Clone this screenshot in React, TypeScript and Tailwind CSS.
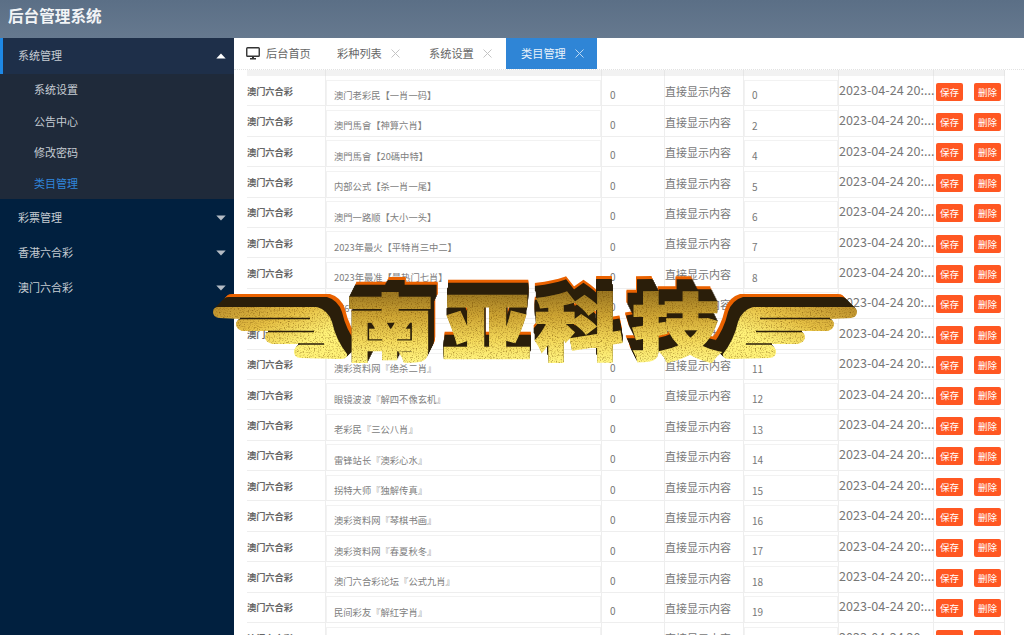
const CJK = "font-['Noto_Sans_CJK_SC','Noto_Sans',sans-serif]";

const rows: [string, string][] = [
  ['澳门老彩民【一肖一码】', '0'],
  ['澳門馬會【神算六肖】', '2'],
  ['澳門馬會【20碼中特】', '4'],
  ['内部公式【杀一肖一尾】', '5'],
  ['澳門一路顺【大小一头】', '6'],
  ['2023年最火【平特肖三中二】', '7'],
  ['2023年最准【最热门七肖】', '8'],
  ['6767彩图【精选四肖】', '9'],
  ['澳彩资料网【六肖中特】', '10'],
  ['澳彩资料网『绝杀二肖』', '11'],
  ['眼镜波波『解四不像玄机』', '12'],
  ['老彩民『三公八肖』', '13'],
  ['雷锋站长『澳彩心水』', '14'],
  ['拐特大师『独解传真』', '15'],
  ['澳彩资料网『琴棋书画』', '16'],
  ['澳彩资料网『春夏秋冬』', '17'],
  ['澳门六合彩论坛『公式九肖』', '18'],
  ['民间彩友『解红字肖』', '19'],
  ['澳门彩友『精准平特』', '20'],
];

function Caret({ up, light }: { up?: boolean; light?: boolean }) {
  return (
    <svg width="10" height="6" viewBox="0 0 10 6" className="shrink-0">
      <path
        d={up ? 'M5 0.5 L9.7 5.5 L0.3 5.5 Z' : 'M0.3 0.5 L9.7 0.5 L5 5.5 Z'}
        fill={light ? '#ffffff' : '#b5bcc5'}
      />
    </svg>
  );
}

function CloseX({ active }: { active?: boolean }) {
  return (
    <svg width="9" height="9" viewBox="0 0 9 9" className="shrink-0">
      <path d="M0.5 0.5 L8.5 8.5 M8.5 0.5 L0.5 8.5" stroke={active ? '#bcd9f3' : '#c4c4c4'} strokeWidth="1" fill="none" />
    </svg>
  );
}

function SideItem({ label }: { label: string }) {
  return (
    <div className="h-[35px] flex items-center justify-between pl-[18px] pr-[8px] text-[11px] text-[#c6ccd3]">
      <span>{label}</span>
      <Caret />
    </div>
  );
}

function SubItem({ label, active }: { label: string; active?: boolean }) {
  return (
    <div className={`h-[31.5px] flex items-center pl-[34px] text-[11px] ${active ? 'text-[#2f86dc]' : 'text-[#c6ccd3]'}`}>
      {label}
    </div>
  );
}

function Btn({ label }: { label: string }) {
  return (
    <span className="w-[27px] h-[18px] rounded-[2px] bg-[#ff5722] text-white text-[9.5px] flex items-center justify-center">{label}</span>
  );
}

function Row({ name, sort }: { name: string; sort: string }) {
  return (
    <div className="grid grid-cols-[79px_276px_63px_79px_95px_95px_71px] h-[30.4px] shrink-0 border-b border-[#eeeeee] overflow-hidden">
      <div className="border-r border-[#eeeeee] pt-[2px] flex items-center text-[9.2px] font-bold text-[#666] whitespace-nowrap">澳门六合彩</div>
      <div className="border-r border-[#eeeeee] pt-[3.5px]">
        <div className="h-full border border-[#f2f2f2] border-b-0 pl-[7px] pt-[6px] flex items-center text-[9.3px] text-[#808080] whitespace-nowrap">{name}</div>
      </div>
      <div className="border-r border-[#eeeeee] pl-[8px] pt-[7px] flex items-center text-[10px] text-[#777]">0</div>
      <div className="border-r border-[#eeeeee] pt-[2px] flex items-center text-[11px] text-[#777] whitespace-nowrap">直接显示内容</div>
      <div className="border-r border-[#eeeeee] pt-[3.5px]">
        <div className="h-full border border-[#f2f2f2] border-b-0 pl-[7px] pt-[4px] flex items-center text-[10px] text-[#777]">{sort}</div>
      </div>
      <div className="border-r border-[#eeeeee] pb-[1px] flex items-center text-[12.6px] text-[#777] whitespace-nowrap">2023-04-24 20:...</div>
      <div className="border-r border-[#eeeeee] pl-[2px] pr-[3px] flex items-center justify-between pt-[2px]">
        <Btn label="保存" />
        <Btn label="删除" />
      </div>
    </div>
  );
}

/* Extrusion + grain filter: the glyph or wing shape is copied upwards step by step. */
function Extrude({ id, dx, steps, region }: { id: string; dx: number; steps: number; region: [number, number, number, number] }) {
  const dark = Array.from({ length: steps }, (_, i) => i + 1);
  const orange = [steps + 1, steps + 2, steps + 3];
  return (
    <filter id={id} filterUnits="userSpaceOnUse" x={region[0]} y={region[1]} width={region[2]} height={region[3]} colorInterpolationFilters="sRGB">
      <feFlood floodColor="#2a1e0a" result="darkC" />
      <feFlood floodColor="#ea6200" result="orangeC" />
      {orange.map((s) => (
        <feOffset key={s} in="SourceAlpha" dx={(dx * s) / (steps + 3)} dy={-s} result={`o${s}`} />
      ))}
      {dark.map((s) => (
        <feOffset key={s} in="SourceAlpha" dx={(dx * s) / (steps + 3)} dy={-s} result={`d${s}`} />
      ))}
      <feMerge result="orangeA">
        {orange.map((s) => (
          <feMergeNode key={s} in={`o${s}`} />
        ))}
      </feMerge>
      <feMerge result="darkA">
        {dark.map((s) => (
          <feMergeNode key={s} in={`d${s}`} />
        ))}
      </feMerge>
      <feComposite in="orangeC" in2="orangeA" operator="in" result="orangeL" />
      <feComposite in="darkC" in2="darkA" operator="in" result="darkL" />
      <feTurbulence type="fractalNoise" baseFrequency="0.8" numOctaves="2" seed="4" result="n" />
      <feColorMatrix in="n" type="matrix" values="0 0 0 0 0.42  0 0 0 0 0.26  0 0 0 0 0  0 0 0 1.5 -0.74" result="sp" />
      <feComposite in="sp" in2="SourceGraphic" operator="in" result="sp2" />
      <feMerge>
        <feMergeNode in="orangeL" />
        <feMergeNode in="darkL" />
        <feMergeNode in="SourceGraphic" />
        <feMergeNode in="sp2" />
      </feMerge>
    </filter>
  );
}

const wing = 'M1 42 Q1 37 7 37 L105 37 Q116 40 120 52 Q124 70 135 84 Q136 89 128 89 L88 88 Q82 87 82 82 Q82 77 88 74 L60 74 Q53 72 53 67 Q53 63 58 61 L30 61 Q24 59 24 54 Q24 50 29 49 L7 48 Q1 47 1 42 Z';
const wingLines = 'M28 48.5 L98 48.5 M56 61.5 L102 61.5 M86 74 L112 74';

function Wing({ mirror }: { mirror?: boolean }) {
  const id = mirror ? 'wr' : 'wl';
  return (
    <svg width="150" height="110" viewBox="0 -10 150 110" className={`shrink-0 overflow-visible ${mirror ? '-scale-x-100' : ''}`}>
      <defs>
        <linearGradient id={`${id}g`} gradientUnits="userSpaceOnUse" x1="20" y1="35" x2="40" y2="90">
          <stop offset="0" stopColor="#c09530" />
          <stop offset="0.5" stopColor="#e6c044" />
          <stop offset="1" stopColor="#fff278" />
        </linearGradient>
        <Extrude id={`${id}f`} dx={13} steps={10} region={[-10, -10, 170, 110]} />
      </defs>
      <path d={wing} fill={`url(#${id}g)`} filter={`url(#${id}f)`} />
      <path d={wingLines} stroke="#2a1e0a" strokeWidth="1.3" fill="none" />
    </svg>
  );
}

const letters: [string, number, string][] = [
  ['南', 390, 'l1'],
  ['亚', 487, 'l2'],
  ['科', 579, 'l3'],
  ['技', 676, 'l4'],
];

function Logo() {
  return (
    <div className="absolute left-[212px] top-[260px] w-[646px] h-[110px] flex items-start pointer-events-none">
      <Wing />
      <svg width="390" height="110" viewBox="340 260 390 110" className="shrink-0 -mx-[22px] relative z-10 overflow-visible">
        <defs>
          <linearGradient id="goldText" gradientUnits="userSpaceOnUse" x1="0" y1="-61" x2="0" y2="6">
            <stop offset="0" stopColor="#9c7822" />
            <stop offset="0.35" stopColor="#cfa634" />
            <stop offset="0.7" stopColor="#f4d95a" />
            <stop offset="1" stopColor="#fff37e" />
          </linearGradient>
          <Extrude id="l1" dx={7} steps={12} region={[330, 260, 120, 110]} />
          <Extrude id="l2" dx={1} steps={12} region={[430, 260, 110, 110]} />
          <Extrude id="l3" dx={-1} steps={12} region={[525, 260, 110, 110]} />
          <Extrude id="l4" dx={-7} steps={12} region={[620, 260, 115, 110]} />
        </defs>
        {letters.map(([ch, x, f]) => (
          <g key={ch} filter={`url(#${f})`}>
            <text
              transform={`translate(${x} 354) scale(1.22 1)`}
              textAnchor="middle"
              fontSize="72"
              fontWeight="900"
              fontFamily="'Noto Sans CJK SC', sans-serif"
              fill="url(#goldText)"
              stroke="url(#goldText)"
              strokeWidth="2.5"
            >
              {ch}
            </text>
          </g>
        ))}
      </svg>
      <Wing mirror />
    </div>
  );
}

export default function App() {
  return (
    <div className={`relative w-[1024px] h-[635px] overflow-hidden bg-white flex flex-col ${CJK}`}>
      <header className="h-[38px] shrink-0 bg-gradient-to-b from-[#5b6f86] to-[#66798f] pl-[8px] pb-[6px] flex items-center text-[15.6px] font-bold text-[#f2f4f6]">
        后台管理系统
      </header>
      <div className="flex flex-1 min-h-0">
        <aside className="w-[234px] shrink-0 bg-[#01203f] flex flex-col">
          <div className="h-[36px] bg-[#1e2f49] border-l-[3px] border-[#1e88e5] pb-[1px] flex items-center justify-between pl-[15px] pr-[8px] text-[11px] text-[#c6ccd3]">
            <span>系统管理</span>
            <Caret up light />
          </div>
          <div className="bg-[#1f2a3a] h-[125px] flex flex-col">
            <SubItem label="系统设置" />
            <SubItem label="公告中心" />
            <SubItem label="修改密码" />
            <SubItem label="类目管理" active />
          </div>
          <div className="h-[1px]" />
          <SideItem label="彩票管理" />
          <SideItem label="香港六合彩" />
          <SideItem label="澳门六合彩" />
        </aside>
        <main className="flex-1 min-w-0 flex flex-col">
          <nav className="h-[31.5px] shrink-0 border-b border-dotted border-[#e2e2e2] flex items-stretch text-[11.2px] text-[#666]">
            <div className="w-[103px] flex items-center pl-[12px] gap-[6px]">
              <svg width="14" height="13" viewBox="0 0 14 13" className="shrink-0">
                <rect x="0.75" y="0.75" width="12.5" height="8.5" rx="0.8" fill="none" stroke="#333" strokeWidth="1.4" />
                <path d="M6 10 H8 V11 H10 V12.4 H4 V11 H6 Z" fill="#333" />
              </svg>
              <span>后台首页</span>
            </div>
            <div className="w-[92px] flex items-center gap-[9px]">
              <span>彩种列表</span>
              <CloseX />
            </div>
            <div className="w-[77px] flex items-center gap-[9px]">
              <span>系统设置</span>
              <CloseX />
            </div>
            <div className="w-[91px] bg-[#2f85d6] text-[#e8f2fb] flex items-center pl-[15px] gap-[9px]">
              <span>类目管理</span>
              <CloseX active />
            </div>
          </nav>
          <div className="ml-[13px] w-[758px] flex flex-col min-h-0 overflow-hidden">
            <div className="h-[6.5px] shrink-0 bg-[#f2f2f2] grid grid-cols-[79px_276px_63px_79px_95px_95px_71px]">
              <div className="border-r border-[#e6e6e6]" />
              <div className="border-r border-[#e6e6e6]" />
              <div className="border-r border-[#e6e6e6]" />
              <div className="border-r border-[#e6e6e6]" />
              <div className="border-r border-[#e6e6e6]" />
              <div className="border-r border-[#e6e6e6]" />
              <div className="border-r border-[#e6e6e6]" />
            </div>
            {rows.map(([n, s]) => (
              <Row key={s} name={n} sort={s} />
            ))}
          </div>
        </main>
      </div>
      <Logo />
    </div>
  );
}
